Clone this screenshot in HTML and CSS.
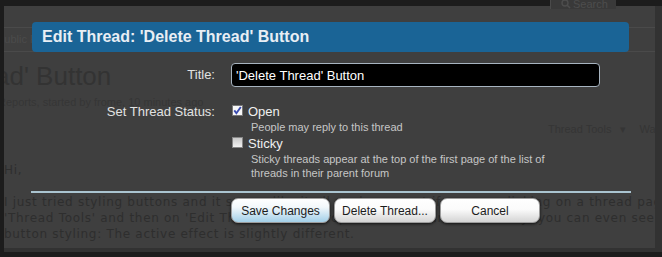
FILE: index.html
```html
<!DOCTYPE html>
<html lang="en">
<head>
    <meta charset="UTF-8">
    <title>Edit Thread</title>
    <link rel="stylesheet" href="styles.css">
</head>
<body>
    <!-- faded forum page behind the overlay -->
    <div class="frame">
        <div class="topbar">
            <div class="search">
                <svg width="10" height="10" viewBox="0 0 10 10"><circle cx="4" cy="4" r="3" fill="none" stroke="#4d4d4d" stroke-width="1.4"/><path d="M6.2 6.2 L9 9" stroke="#4d4d4d" stroke-width="1.6"/></svg>
                <span>Search</span>
            </div>
        </div>
        <div class="page">
            <div class="crumbs">Public Forums</div>
            <h1 class="thread-title">ad' Button</h1>
            <div class="meta">Reports, started by frome, 10 minutes ago</div>
            <div class="tools">
                <span>Thread Tools</span>
                <span class="caret">▾</span>
                <span class="watch">Watch Thread</span>
            </div>
            <div class="post">
                Hi,<br><br>
                I just tried styling buttons and it seems like it all works, except if you are clicking on a thread page<br>
                'Thread Tools' and then on 'Edit Thread' in the dropdown menu. In this overlay, you can even see the<br>
                button styling: The active effect is slightly different.
            </div>
        </div>
    </div>

    <!-- edit thread overlay -->
    <div class="dialog">
        <div class="dialog-title">Edit Thread: 'Delete Thread' Button</div>
        <div class="form">
            <label class="form-label">Title:</label>
            <input class="text-input" type="text" value="'Delete Thread' Button">

            <div class="form-label status-label">Set Thread Status:</div>
            <div class="options">
                <div class="option">
                    <span class="check checked">
                        <svg width="11" height="11" viewBox="0 0 11 11"><path d="M2.3 5.4 L4.4 8.2 L8.8 2" fill="none" stroke="#3a4bb0" stroke-width="1.9"/></svg>
                    </span>
                    <span class="option-name">Open</span>
                </div>
                <div class="option-desc">People may reply to this thread</div>
                <div class="option sticky">
                    <span class="check"></span>
                    <span class="option-name">Sticky</span>
                </div>
                <div class="option-desc">Sticky threads appear at the top of the first page of the list of<br>threads in their parent forum</div>
            </div>
        </div>
        <div class="divider"></div>
        <div class="buttons">
            <button class="btn primary save">Save Changes</button>
            <button class="btn delete">Delete Thread...</button>
            <button class="btn cancel">Cancel</button>
        </div>
    </div>
</body>
</html>
```

FILE: styles.css
```css
* {
    margin: 0;
    padding: 0;
    box-sizing: border-box;
}

body {
    position: relative;
    width: 662px;
    height: 257px;
    overflow: hidden;
    background-color: #1c1c1c;
    font-family: 'Liberation Sans', Arial, sans-serif;
}

/* 背景页面 */
.frame {
    padding-left: 4px;
}

.topbar {
    height: 6px;
    display: flex;
}

.search {
    position: relative;
    z-index: 1;
    margin-left: 546px;
    width: 66px;
    height: 11px;
    margin-top: -2px;
    background-color: #393939;
    border-left: 1px solid #4a4a4a;
    display: flex;
    align-items: center;
    gap: 2px;
    padding-left: 10px;
    font-size: 11px;
    color: #4d4d4d;
}

.page {
    width: 658px;
    height: 246px;
    background-color: #3f3f3f;
    border-right: 7px solid #323232;
    border-bottom: 4px solid #323232;
    overflow: hidden;
    padding-top: 21px;
}

.crumbs {
    height: 25px;
    border-top: 1px solid #4a4a4a;
    border-bottom: 1px solid #4a4a4a;
    font-size: 11px;
    line-height: 23px;
    color: #4b4b4b;
    margin-left: -7px;
    white-space: nowrap;
}

.thread-title {
    font-size: 26px;
    font-weight: normal;
    line-height: 30px;
    margin-top: 9px;
    margin-left: -9px;
    color: #333;
    white-space: nowrap;
}

.meta {
    font-size: 11px;
    line-height: 14px;
    margin-top: 4px;
    margin-left: -6px;
    color: #363636;
    white-space: nowrap;
}

.tools {
    font-size: 11px;
    line-height: 14px;
    margin-top: 13px;
    padding-left: 544px;
    color: #353535;
    white-space: nowrap;
}

.caret {
    margin-left: 6px;
}

.watch {
    margin-left: 10px;
}

.post {
    font-family: 'DejaVu Sans', Verdana, sans-serif;
    font-size: 12px;
    letter-spacing: 0.7px;
    line-height: 16px;
    margin-top: 26px;
    color: #2e2e2e;
    white-space: nowrap;
}

/* 编辑弹窗 */
.dialog {
    position: absolute;
    top: 22px;
    left: 31px;
    width: 600px;
}

.dialog-title {
    margin: 0 2px 0 1px;
    height: 30px;
    background-color: #1a6496;
    border-radius: 4px;
    color: #e8eef4;
    font-size: 16px;
    font-weight: bold;
    line-height: 30px;
    padding-left: 10px;
}

.form {
    display: grid;
    grid-template-columns: 184px 369px;
    column-gap: 16px;
    row-gap: 17px;
    margin-top: 11px;
}

.form-label {
    font-size: 13px;
    line-height: 24px;
    text-align: right;
    color: #e2e2e2;
}

.status-label {
    line-height: 16px;
}

.text-input {
    height: 24px;
    width: 369px;
    background-color: #000;
    border: 1px solid #a7b4c0;
    border-radius: 4px;
    color: #fff;
    font-family: 'Liberation Sans', Arial, sans-serif;
    font-size: 13px;
    padding-left: 4px;
    outline: none;
}

.option {
    display: flex;
    align-items: flex-start;
    gap: 5px;
    padding-left: 1px;
    font-size: 13px;
    line-height: 16px;
    color: #f0f0f0;
}

.option.sticky {
    margin-top: 2px;
}

.check {
    width: 11px;
    height: 11px;
    margin-top: 1px;
    border: 1px solid #868686;
    background: linear-gradient(#c9c9c9, #f2f2f2);
    display: flex;
}

.check.checked {
    background: #f7f7f7;
    border-color: #777;
}

.check svg {
    margin: -1px;
}

.option-desc {
    padding-left: 20px;
    font-size: 11px;
    line-height: 14px;
    color: #c6c6c6;
    white-space: nowrap;
}

.divider {
    height: 2px;
    margin-top: 11px;
    background-color: #aac4d0;
}

.buttons {
    display: flex;
    gap: 4px;
    padding-left: 200px;
    margin-top: 5px;
}

.btn {
    height: 25px;
    border: 1px solid #9c9c9c;
    border-radius: 7px;
    background: linear-gradient(#ffffff, #fbfbfb 45%, #d4d4d4);
    box-shadow: 0 1px 3px rgba(0, 0, 0, 0.7);
    font-family: 'Liberation Sans', Arial, sans-serif;
    font-size: 12px;
    color: #1c1c1c;
}

.btn.primary {
    background: linear-gradient(#ffffff, #f3f8fb 35%, #a2cfe8);
}

.save {
    width: 99px;
}

.delete {
    width: 102px;
}

.cancel {
    width: 100px;
}
```
